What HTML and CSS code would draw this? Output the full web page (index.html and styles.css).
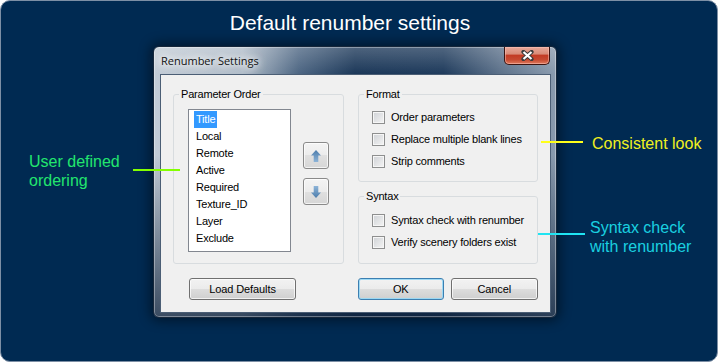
FILE: index.html
```html
<!DOCTYPE html>
<html lang="en">
<head>
    <meta charset="UTF-8">
    <title>Default renumber settings</title>
    <link rel="stylesheet" href="styles.css">
</head>
<body>
    <div class="panel">
        <h1 class="heading">Default renumber settings</h1>

        <div class="stage">
            <div class="notes notes-left">
                <p class="note note-green">User defined<br>ordering</p>
            </div>

            <div class="window">
                <div class="titlebar">
                    <span class="window-title">Renumber Settings</span>
                    <button class="close-btn" type="button">
                        <svg width="13" height="11" viewBox="0 0 13 11">
                            <path d="M2.5 2 L10.5 9 M10.5 2 L2.5 9" stroke="#3b3b3b" stroke-width="4.2" stroke-linecap="round"/>
                            <path d="M2.5 2 L10.5 9 M10.5 2 L2.5 9" stroke="#ffffff" stroke-width="2.2"/>
                        </svg>
                    </button>
                </div>

                <div class="client">
                    <fieldset class="group">
                        <legend>Parameter Order</legend>
                        <div class="group-body order-body">
                            <ul class="listbox">
                                <li><span class="selected">Title</span></li>
                                <li><span>Local</span></li>
                                <li><span>Remote</span></li>
                                <li><span>Active</span></li>
                                <li><span>Required</span></li>
                                <li><span>Texture_ID</span></li>
                                <li><span>Layer</span></li>
                                <li><span>Exclude</span></li>
                            </ul>
                            <div class="movers">
                                <button class="mover" type="button">
                                    <svg width="10" height="12" viewBox="0 0 10 12">
                                        <defs>
                                            <linearGradient id="arrow-up" x1="0" y1="0" x2="0" y2="1">
                                                <stop offset="0" stop-color="#4c7cab"/>
                                                <stop offset="1" stop-color="#8db4d8"/>
                                            </linearGradient>
                                        </defs>
                                        <path d="M5 0 L10 5.5 L7.3 5.5 L7.3 12 L2.7 12 L2.7 5.5 L0 5.5 Z" fill="url(#arrow-up)"/>
                                    </svg>
                                </button>
                                <button class="mover" type="button">
                                    <svg width="10" height="12" viewBox="0 0 10 12">
                                        <defs>
                                            <linearGradient id="arrow-down" x1="0" y1="0" x2="0" y2="1">
                                                <stop offset="0" stop-color="#8db4d8"/>
                                                <stop offset="1" stop-color="#4c7cab"/>
                                            </linearGradient>
                                        </defs>
                                        <path d="M5 12 L10 6.5 L7.3 6.5 L7.3 0 L2.7 0 L2.7 6.5 L0 6.5 Z" fill="url(#arrow-down)"/>
                                    </svg>
                                </button>
                            </div>
                        </div>
                    </fieldset>

                    <div class="right-groups">
                        <fieldset class="group">
                            <legend>Format</legend>
                            <div class="group-body format-body">
                                <label class="check"><span class="box"></span>Order parameters</label>
                                <label class="check"><span class="box"></span>Replace multiple blank lines</label>
                                <label class="check"><span class="box"></span>Strip comments</label>
                            </div>
                        </fieldset>
                        <fieldset class="group">
                            <legend>Syntax</legend>
                            <div class="group-body syntax-body">
                                <label class="check"><span class="box"></span>Syntax check with renumber</label>
                                <label class="check"><span class="box"></span>Verify scenery folders exist</label>
                            </div>
                        </fieldset>
                    </div>

                    <button class="btn load-btn" type="button">Load Defaults</button>
                    <div class="dialog-actions">
                        <button class="btn btn-default btn-ok" type="button">OK</button>
                        <button class="btn btn-cancel" type="button">Cancel</button>
                    </div>
                </div>
            </div>

            <div class="notes notes-right">
                <p class="note note-yellow">Consistent look</p>
                <p class="note note-cyan">Syntax check<br>with renumber</p>
            </div>
        </div>
    </div>
</body>
</html>
```

FILE: styles.css
```css
:root {
    --navy: #002a52;
    --dialog-bg: #f0f0f0;
    --group-line: #d8dcdf;
    --note-green: #22e66e;
    --note-yellow: #f0f020;
    --note-cyan: #1ad0e0;
}

body {
    margin: 0;
    background: #ffffff;
    font-family: "Liberation Sans", Arial, sans-serif;
}

.panel {
    width: 718px;
    height: 362px;
    box-sizing: border-box;
    padding-top: 10px;
    border: 1px solid #7d8fa5;
    border-radius: 10px;
    background: var(--navy);
    overflow: hidden;
}

.heading {
    margin: 0;
    padding-right: 18px;
    font-size: 21px;
    line-height: 24px;
    font-weight: normal;
    color: #ffffff;
    text-align: center;
}

.stage {
    display: flex;
    align-items: flex-start;
    margin-top: 11px;
}

/* callout notes */
.notes-left {
    flex: none;
    width: 152px;
}

.notes-right {
    flex: 1;
    padding-left: 35px;
}

.note {
    position: relative;
    z-index: 1;
    margin: 0;
    font-size: 16px;
    line-height: 19px;
}

.note::after {
    content: "";
    position: absolute;
    height: 2px;
}

.note-green {
    margin: 106px 0 0 28px;
    color: var(--note-green);
}

.note-green::after {
    left: 104px;
    top: 17px;
    width: 47px;
    background: #84ff00;
}

.note-yellow {
    margin-top: 88px;
    color: var(--note-yellow);
}

.note-yellow::after {
    left: -51px;
    top: 7px;
    width: 42px;
    background: #ffff1a;
}

.note-cyan {
    margin: 65px 0 0 -2px;
    color: var(--note-cyan);
}

.note-cyan::after {
    left: -52px;
    top: 15px;
    width: 47px;
    background: #20e4f2;
}

/* window frame */
.window {
    flex: none;
    display: flex;
    flex-direction: column;
    width: 404px;
    height: 272px;
    box-sizing: border-box;
    border: 1px solid #15263a;
    border-radius: 6px;
    background:
        linear-gradient(180deg, rgba(255, 255, 255, 0.22) 0, rgba(255, 255, 255, 0) 27px, rgba(0, 0, 0, 0) 40%, rgba(12, 32, 58, 0.75) 100%),
        linear-gradient(90deg, #c3ccd6 0%, #b1bdc9 22%, #4d6683 36%, #1c3859 50%, #1f3b5c 72%, #5c718a 86%, #8a9bae 100%);
    box-shadow: 0 0 12px 3px rgba(0, 0, 0, 0.45), inset 0 0 0 1px rgba(255, 255, 255, 0.35);
}

.titlebar {
    display: flex;
    align-items: center;
    height: 27px;
    padding: 0 6px 0 7px;
}

.window-title {
    flex: 1;
    font-family: "Open Sans", "Liberation Sans", sans-serif;
    font-size: 11px;
    color: #111111;
    text-shadow: 0 0 6px #ffffff, 0 0 10px #ffffff, 0 0 14px rgba(255, 255, 255, 0.8);
}

.close-btn {
    align-self: flex-start;
    display: flex;
    align-items: center;
    justify-content: center;
    width: 46px;
    height: 18px;
    margin: 0;
    padding: 0;
    border: 1px solid #3c1410;
    border-top: none;
    border-radius: 0 0 5px 5px;
    background: linear-gradient(#e9a99a 0%, #d98c78 40%, #c33c25 50%, #c64a31 75%, #e07a5d 100%);
    box-shadow: inset 0 0 0 1px rgba(255, 200, 190, 0.5);
}

/* dialog body */
.client {
    display: grid;
    grid-template-columns: 171px 180px;
    grid-template-rows: 176px 22px;
    column-gap: 14px;
    row-gap: 14px;
    height: 239px;
    box-sizing: border-box;
    margin: 0 5px 4px 6px;
    padding: 13px 12px 12px;
    border: 1px solid #4b5e75;
    background: var(--dialog-bg);
    font-size: 11px;
    letter-spacing: -0.2px;
    color: #000000;
}

.group {
    min-width: 0;
    margin: 0;
    padding: 0;
    border: 1px solid var(--group-line);
    border-radius: 3px;
}

.group legend {
    margin-left: 5px;
    padding: 0 2px;
    font-size: 11px;
    line-height: 13px;
}

.order-body {
    display: flex;
    align-items: flex-start;
    padding: 8px 0 11px 14px;
}

.listbox {
    width: 103px;
    height: 143px;
    box-sizing: border-box;
    margin: 0;
    padding: 1px 0 0 5px;
    list-style: none;
    border: 1px solid #828790;
    background: #ffffff;
}

.listbox li {
    height: 17px;
    line-height: 17px;
}

.listbox span {
    display: inline-block;
    padding: 0 2px;
}

.listbox .selected {
    background: #3399ff;
    color: #ffffff;
}

.movers {
    display: flex;
    flex-direction: column;
    gap: 9px;
    margin: 33px 0 0 12px;
}

.mover {
    display: flex;
    align-items: center;
    justify-content: center;
    width: 26px;
    height: 27px;
    padding: 0;
    border: 1px solid #8a8a8a;
    border-radius: 3px;
    background: linear-gradient(#f4f4f4 0%, #ececec 50%, #e0e0e0 50%, #d6d6d6 100%);
    box-shadow: inset 0 0 0 1px rgba(255, 255, 255, 0.7);
}

.right-groups {
    display: flex;
    flex-direction: column;
    gap: 8px;
}

.format-body {
    padding: 5px 0 9px 13px;
}

.syntax-body {
    padding: 6px 0 10px 13px;
}

.check {
    display: flex;
    align-items: center;
    gap: 6px;
    height: 22px;
}

.box {
    flex: none;
    width: 13px;
    height: 13px;
    box-sizing: border-box;
    border: 1px solid #8e8f8f;
    background: linear-gradient(135deg, #cfd2d6, #f4f4f4);
    box-shadow: inset 0 0 0 1px #f6f6f6;
}

/* push buttons */
.btn {
    height: 22px;
    box-sizing: border-box;
    padding: 0;
    border: 1px solid #707070;
    border-radius: 3px;
    background: linear-gradient(#f2f2f2 0%, #ebebeb 50%, #dddddd 50%, #cfcfcf 100%);
    box-shadow: inset 0 0 0 1px rgba(255, 255, 255, 0.7);
    font-family: "Liberation Sans", Arial, sans-serif;
    font-size: 11px;
    letter-spacing: -0.1px;
    color: #000000;
}

.btn-default {
    border-color: #3c7fb1;
    box-shadow: inset 0 0 0 1px rgba(150, 215, 245, 0.9);
}

.load-btn {
    justify-self: start;
    width: 107px;
    margin-left: 16px;
}

.dialog-actions {
    display: flex;
    justify-content: flex-end;
    gap: 7px;
}

.btn-ok {
    width: 86px;
}

.btn-cancel {
    width: 88px;
}
```
